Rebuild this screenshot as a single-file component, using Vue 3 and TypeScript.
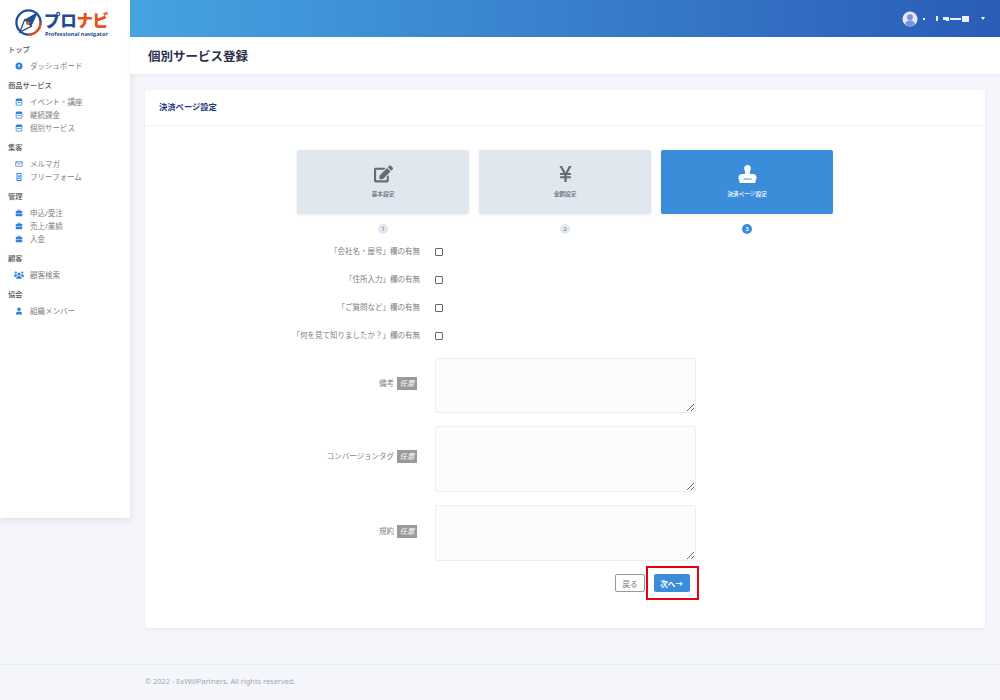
<template>
  <div class="page">
    <div class="upper">
      <aside class="sidebar">
        <div class="logo">
          <svg class="logo-mark" viewBox="0 0 30 30">
            <circle cx="15" cy="15" r="12.500" fill="none" stroke="#1f4e96" stroke-width="2.400" />
            <path d="M15 27.500A12.500 12.500 0 0 0 27.500 15" fill="none" stroke="#e8511a" stroke-width="2.400" />
            <path d="M25 4 L18 19 L11 12 Z" fill="#1f4e96" />
            <path d="M6 25 L11 12 L18 19 Z" fill="#fff" stroke="#1f4e96" stroke-width="1.400" />
            <circle cx="14.500" cy="15.500" r="2" fill="#e8511a" />
          </svg>
          <div class="logo-text">
            <div class="logo-name"><span class="navy">プロ</span><span class="orange">ナビ</span></div>
            <div class="logo-sub">Professional navigator</div>
          </div>
        </div>
        <nav>
          <section v-for="s in sections" :key="s.title" class="nav-section">
            <h3>{{ s.title }}</h3>
            <ul>
              <li v-for="item in s.items" :key="item.label">
                <svg class="nav-icon" :class="{ wide: item.icon === 'users' }" viewBox="0 0 16 16" v-html="icons[item.icon]"></svg>
                <span>{{ item.label }}</span>
              </li>
            </ul>
          </section>
        </nav>
      </aside>

      <div class="main">
        <header class="topbar">
          <div class="user">
            <svg class="avatar" viewBox="0 0 18 18">
              <circle cx="9" cy="9" r="8.500" fill="#e3e8fa" />
              <circle cx="9" cy="7" r="3.300" fill="#7d8fe0" />
              <path d="M3.400 15c.6-3.400 2.800-4.600 5.600-4.600s5 1.200 5.600 4.600A8.500 8.500 0 0 1 3.400 15z" fill="#7d8fe0" />
            </svg>
            <div class="masked">
              <i v-for="(w, n) in maskBars" :key="n" :style="{ width: w.w + 'px', height: w.h + 'px', marginLeft: w.m + 'px' }"></i>
            </div>
            <span class="caret"></span>
          </div>
        </header>
        <div class="subbar"><h1>個別サービス登録</h1></div>

        <div class="content">
          <div class="card">
            <div class="card-head">決済ページ設定</div>
            <div class="card-body">
              <div class="steps">
                <div v-for="(st, n) in steps" :key="st.label" class="step">
                  <div class="step-box" :class="{ active: n === 2 }">
                    <svg v-if="n === 0" class="step-icon" viewBox="0 0 576 512"><path fill="currentColor" d="M402.600 83.200l90.200 90.200c3.800 3.800 3.800 10 0 13.800L274.400 405.600l-92.800 10.300c-12.400 1.400-22.900-9.100-21.500-21.500l10.300-92.800L388.800 83.200c3.800-3.800 10-3.800 13.800 0zm162-22.900l-48.800-48.800c-15.200-15.200-39.900-15.200-55.200 0l-35.400 35.400c-3.800 3.800-3.800 10 0 13.800l90.200 90.200c3.800 3.800 10 3.800 13.800 0l35.400-35.400c15.200-15.300 15.200-40 0-55.200zM384 346.200V448H64V128h229.800c3.200 0 6.200-1.300 8.500-3.500l40-40c7.600-7.600 2.200-20.500-8.500-20.500H48C21.500 64 0 85.500 0 112v352c0 26.500 21.500 48 48 48h352c26.500 0 48-21.500 48-48V306.200c0-10.700-12.900-16-20.500-8.500l-40 40c-2.200 2.300-3.500 5.300-3.500 8.500z" /></svg>
                    <svg v-else-if="n === 1" class="step-icon" viewBox="0 0 20 20"><path fill="currentColor" d="M3.200 1h3l3.800 7.200L13.800 1h3l-4.400 8H16v2h-4.700v1.600H16v2h-4.700V19H8.700v-4.400H4v-2h4.700V11H4V9h3.600z" /></svg>
                    <svg v-else class="step-icon" viewBox="0 0 512 512"><path fill="currentColor" d="M32 512h448v-64H32v64zm384-256h-66.560c-16.260 0-29.440-13.180-29.440-29.440v-9.460c0-27.370 8.880-53.410 21.460-77.720 9.110-17.610 12.900-38.390 9.050-60.420-6.770-38.780-38.470-70.700-77.260-77.450C212.620-9.040 160 37.330 160 96c0 14.160 3.120 27.540 8.690 39.580C182.020 164.430 192 194.700 192 226.490v.07c0 16.260-13.180 29.440-29.440 29.440H96c-53.020 0-96 42.980-96 96v32c0 17.670 14.330 32 32 32h448c17.670 0 32-14.330 32-32v-32c0-53.020-42.980-96-96-96z" /><rect x="20" y="410" width="472" height="50" fill="currentColor" /><rect x="140" y="385" width="232" height="26" fill="#3c8dd9" /></svg>
                    <span class="step-label">{{ st.label }}</span>
                  </div>
                  <span class="step-num" :class="{ active: n === 2 }">{{ n + 1 }}</span>
                </div>
              </div>

              <div class="form">
                <div v-for="c in checks" :key="c" class="row check-row">
                  <label>{{ c }}</label>
                  <input type="checkbox" />
                </div>
                <div class="areas">
                  <div v-for="t in areas" :key="t.label" class="row area-row">
                    <label :style="{ paddingTop: t.top + 'px' }">{{ t.label }}<em>任意</em></label>
                    <textarea :style="{ height: t.height + 'px' }"></textarea>
                  </div>
                </div>
                <div class="actions">
                  <button class="back" type="button">戻る</button>
                  <span class="mark"><button class="next" type="button">次へ→</button></span>
                </div>
              </div>
            </div>
          </div>
        </div>
      </div>
    </div>

    <footer class="footer">© 2022 - ExWillPartners. All rights reserved.</footer>
  </div>
</template>

<script setup lang="ts">
const cal =
  '<path fill="currentColor" d="M3 1.500h2V0h1.500v1.500h3V0H11v1.500h2A1.500 1.500 0 0 1 14.500 3v10.500A1.500 1.500 0 0 1 13 15H3a1.500 1.500 0 0 1-1.500-1.500V3A1.500 1.500 0 0 1 3 1.500zM3 6v7.500h10V6z"/><rect x="4.500" y="8" width="7" height="1.500" fill="currentColor"/>'

const icons: Record<string, string> = {
  dash: '<circle cx="8" cy="8" r="7" fill="currentColor"/><path d="M8 4l2.500 4H9v3H7V8H5.500z" fill="#fff"/>',
  cal,
  mail: '<path fill="none" stroke="currentColor" stroke-width="1.500" d="M1.500 3.500h13v9h-13zM2 4l6 4.500L14 4"/>',
  form: '<path fill="currentColor" d="M3 0h10v16H3zM4.500 2v3h7V2zm0 5v3h3V7zm4.500 0v3h2.500V7zM4.500 11.500V14h7v-2.500z"/>',
  case: '<path fill="currentColor" d="M5 1.500h6V4h3.500v4h-13V4H5zM6.500 3v1h3V3zM1.500 9h13v5.500h-13z"/>',
  users: '<circle cx="8" cy="6.500" r="2.500" fill="currentColor"/><circle cx="2.800" cy="4" r="1.800" fill="currentColor"/><circle cx="13.200" cy="4" r="1.800" fill="currentColor"/><path fill="currentColor" d="M3.500 14c0-3 2-4.500 4.500-4.500s4.500 1.500 4.500 4.500zM0 10c0-2 1.200-3.300 3-3.300.6 0 1 .1 1.500.4-.2 1 .2 1.600.6 2-.9.300-1.600.8-2 1.500H0zM16 10.600h-3.100c-.4-.7-1.100-1.200-2-1.500.4-.4.8-1 .6-2 .5-.3.9-.4 1.500-.4 1.800 0 3 1.300 3 3.300z"/>',
  user: '<circle cx="8" cy="4.500" r="3.500" fill="currentColor"/><path fill="currentColor" d="M2 15v-2c0-2.500 2-4 6-4s6 1.500 6 4v2z"/>',
}

const sections = [
  { title: 'トップ', items: [{ icon: 'dash', label: 'ダッシュボード' }] },
  {
    title: '商品サービス',
    items: [
      { icon: 'cal', label: 'イベント・講座' },
      { icon: 'cal', label: '継続課金' },
      { icon: 'cal', label: '個別サービス' },
    ],
  },
  {
    title: '集客',
    items: [
      { icon: 'mail', label: 'メルマガ' },
      { icon: 'form', label: 'フリーフォーム' },
    ],
  },
  {
    title: '管理',
    items: [
      { icon: 'case', label: '申込/受注' },
      { icon: 'case', label: '売上/業績' },
      { icon: 'case', label: '入金' },
    ],
  },
  { title: '顧客', items: [{ icon: 'users', label: '顧客検索' }] },
  { title: '協会', items: [{ icon: 'user', label: '組織メンバー' }] },
]

const maskBars = [
  { w: 2, h: 2, m: 0 },
  { w: 2, h: 5, m: 11 },
  { w: 3, h: 3, m: 5 },
  { w: 3, h: 4, m: 0 },
  { w: 11, h: 2, m: 1 },
  { w: 7, h: 6, m: 1 },
]

const steps = [{ label: '基本設定' }, { label: '金額設定' }, { label: '決済ページ設定' }]

const checks = [
  '「会社名・屋号」欄の有無',
  '「住所入力」欄の有無',
  '「ご質問など」欄の有無',
  '「何を見て知りましたか？」欄の有無',
]

const areas = [
  { label: '備考', height: 55, top: 19 },
  { label: 'コンバージョンタグ', height: 66, top: 24 },
  { label: '規約', height: 56, top: 20 },
]
</script>

<style>
html,
body {
  margin: 0;
  background: #f4f6fb;
}
</style>

<style scoped>
.page {
  height: 700px;
  overflow: hidden;
  font-family: "Noto Sans", "Noto Sans CJK JP", sans-serif;
  color: #6e707e;
}
.upper {
  display: flex;
  align-items: flex-start;
  height: 664px;
}
.sidebar {
  flex: 0 0 130px;
  height: 518px;
  background: #fff;
  box-shadow: 0 2px 6px rgba(58, 59, 69, 0.12);
  box-sizing: border-box;
}
.logo {
  display: flex;
  align-items: center;
  height: 40px;
  padding: 8px 0 0 14px;
  box-sizing: border-box;
}
.logo-mark {
  width: 29px;
  height: 29px;
  margin-top: -3px;
  flex: none;
}
.logo-text {
  margin-left: 1px;
}
.logo-name {
  font-family: "Noto Sans CJK JP", sans-serif;
  font-size: 16.500px;
  font-weight: 900;
  line-height: 20px;
  letter-spacing: -0.3px;
}
.navy {
  color: #1f4e96;
}
.orange {
  color: #e8511a;
}
.logo-sub {
  margin-top: 1px;
  padding-left: 1px;
  font-size: 5.600px;
  font-weight: 700;
  color: #1f4e96;
  line-height: 7px;
  white-space: nowrap;
}
nav {
  padding-top: 3px;
}
.nav-section {
  margin-bottom: 7px;
}
.nav-section h3 {
  margin: 0;
  padding-left: 8px;
  font-size: 7.300px;
  font-weight: 500;
  line-height: 12px;
  color: #555;
}
.nav-section ul {
  list-style: none;
  margin: 0;
  padding: 4px 0 0;
}
.nav-section li {
  display: flex;
  align-items: center;
  height: 13px;
  padding-left: 15px;
  font-size: 7.500px;
  color: #808080;
}
.nav-icon {
  width: 8px;
  height: 8px;
  margin-right: 7px;
  color: #2f80d8;
  flex: none;
}
.nav-icon.wide {
  width: 10px;
  height: 10px;
  margin-left: -1px;
  margin-right: 6px;
}
.main {
  flex: 1;
  min-width: 0;
  display: flex;
  flex-direction: column;
}
.topbar {
  height: 37px;
  flex: none;
  background: linear-gradient(90deg, #46a3e0, #2a5cb8);
  display: flex;
  align-items: center;
  justify-content: flex-end;
  padding-right: 15px;
}
.user {
  display: flex;
  align-items: center;
}
.avatar {
  width: 16px;
  height: 16px;
}
.masked {
  display: flex;
  align-items: center;
  margin-left: 5px;
}
.masked i {
  display: block;
  background: #fff;
  opacity: 0.9;
}
.caret {
  width: 0;
  height: 0;
  margin-left: 12px;
  border: 2.500px solid transparent;
  border-top: 3px solid #fff;
  border-bottom: 0;
}
.subbar {
  height: 37px;
  flex: none;
  background: #fff;
  box-shadow: 0 1px 4px rgba(58, 59, 69, 0.08);
  display: flex;
  align-items: center;
  padding-left: 18px;
}
.subbar h1 {
  margin: 0;
  font-size: 12.500px;
  font-weight: 700;
  color: #2b2f4a;
}
.content {
  padding: 16px 15px 0;
  flex: none;
}
.card {
  height: 538px;
  background: #fff;
  border-radius: 3px;
  box-shadow: 0 1px 4px rgba(58, 59, 69, 0.06);
}
.card-head {
  height: 36px;
  box-sizing: border-box;
  border-bottom: 1px solid #f0f1f5;
  padding: 11px 0 0 14px;
  font-size: 8.300px;
  line-height: 12px;
  font-weight: 700;
  color: #1f3a7a;
}
.steps {
  display: flex;
  justify-content: center;
  gap: 10px;
  padding-top: 24px;
}
.step {
  width: 172px;
  display: flex;
  flex-direction: column;
  align-items: center;
}
.step-box {
  width: 100%;
  height: 64px;
  box-sizing: border-box;
  background: #e1e7ee;
  color: #646c76;
  border-radius: 2px;
  box-shadow: 0 1px 3px rgba(58, 59, 69, 0.1);
  display: flex;
  flex-direction: column;
  align-items: center;
  padding-top: 15px;
}
.step-box.active {
  background: #3c8dd9;
  color: #fff;
}
.step-icon {
  width: 19px;
  height: 18px;
}
.step-label {
  margin-top: 7px;
  font-size: 5.700px;
  line-height: 8px;
  font-weight: 500;
}
.step-num {
  margin-top: 10px;
  width: 10px;
  height: 10px;
  border-radius: 50%;
  background: #e1e7ee;
  color: #646c76;
  font-size: 5.500px;
  line-height: 10px;
  text-align: center;
}
.step-num.active {
  background: #3c8dd9;
  color: #fff;
  font-weight: 700;
}
.form {
  padding-top: 8px;
}
.row {
  display: flex;
}
.row label {
  width: 275px;
  box-sizing: border-box;
  text-align: right;
  font-size: 7.500px;
  color: #808080;
  white-space: nowrap;
}
.check-row {
  height: 28px;
  align-items: flex-start;
}
.check-row label {
  line-height: 16px;
  padding-top: 1px;
}
.check-row input {
  appearance: none;
  width: 6px;
  height: 6px;
  margin: 6px 0 0 15px;
  border: 1px solid #666;
  border-radius: 1px;
  box-sizing: content-box;
  background: #fff;
}
.areas {
  padding-top: 4px;
}
.area-row {
  align-items: flex-start;
  margin-bottom: 13px;
}
.area-row label {
  width: 272px;
  line-height: 13px;
}
.area-row em {
  display: inline-block;
  margin-left: 3px;
  width: 20px;
  height: 13px;
  background: #9a9a9a;
  color: #fff;
  font-size: 7.500px;
  line-height: 13px;
  font-style: italic;
  text-align: center;
}
.area-row textarea {
  display: block;
  width: 261px;
  margin-left: 18px;
  padding: 0;
  box-sizing: border-box;
  border: 1px solid #eceef4;
  border-radius: 2px;
  background: #fcfcfe;
}
.actions {
  display: flex;
  align-items: center;
  height: 34px;
  margin-top: -8px;
  padding-left: 470px;
}
.actions button {
  font-family: inherit;
  font-size: 7.500px;
  padding: 0;
  border-radius: 2px;
  cursor: pointer;
}
.back {
  width: 30px;
  height: 18px;
  background: #fff;
  border: 1px solid #999;
  color: #777;
}
.mark {
  box-sizing: border-box;
  width: 53px;
  height: 34px;
  margin-left: 1px;
  border: 2.500px solid #e60012;
  display: flex;
  align-items: center;
  padding-left: 5.500px;
}
.next {
  width: 36px;
  height: 18px;
  background: #3c8dd9;
  border: 0;
  color: #fff;
  font-weight: 700;
}
.footer {
  height: 36px;
  border-top: 1px solid #e9ebf2;
  box-sizing: border-box;
  padding: 10px 0 0 145px;
  font-size: 7.400px;
  line-height: 12px;
  color: #a3a6b0;
}
</style>
